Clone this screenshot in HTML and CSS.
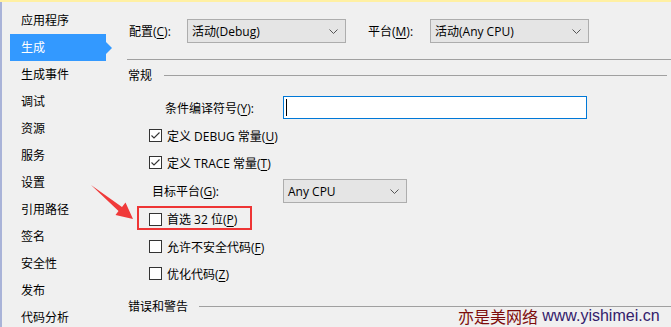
FILE: index.html
```html
<!DOCTYPE html>
<html lang="zh-CN">
<head>
  <meta charset="UTF-8" />
  <title>生成</title>
  <link rel="stylesheet" href="styles.css">
</head>
<body>
  <div class="topline"></div>
  <div class="window">
    <ul class="nav">
      <li>应用程序</li>
      <li class="active">生成</li>
      <li>生成事件</li>
      <li>调试</li>
      <li>资源</li>
      <li>服务</li>
      <li>设置</li>
      <li>引用路径</li>
      <li>签名</li>
      <li>安全性</li>
      <li>发布</li>
      <li>代码分析</li>
    </ul>

    <div class="page">
      <div class="config-row">
        <label class="lbl lbl-config">配置(<u>C</u>):</label>
        <div class="select select-config">
          <span>活动(Debug)</span>
          <svg class="chevron" width="9" height="5" viewBox="0 0 9 5"><polyline points="0.5,0.5 4.5,4.5 8.5,0.5" /></svg>
        </div>
        <label class="lbl lbl-platform">平台(<u>M</u>):</label>
        <div class="select select-config">
          <span>活动(Any CPU)</span>
          <svg class="chevron" width="9" height="5" viewBox="0 0 9 5"><polyline points="0.5,0.5 4.5,4.5 8.5,0.5" /></svg>
        </div>
      </div>

      <div class="rule"></div>

      <div class="section section-general">
        <span>常规</span>
        <i class="section-line"></i>
      </div>

      <div class="field-row">
        <label class="field-label">条件编译符号(<u>Y</u>):</label>
        <div class="textbox"><i class="caret"></i></div>
      </div>

      <div class="check-row first-check">
        <span class="box">
          <svg width="11" height="11" viewBox="0 0 11 11"><polyline points="1.5,5.5 4,8 9.5,2.5" /></svg>
        </span>
        <span>定义 DEBUG 常量(<u>U</u>)</span>
      </div>
      <div class="check-row">
        <span class="box">
          <svg width="11" height="11" viewBox="0 0 11 11"><polyline points="1.5,5.5 4,8 9.5,2.5" /></svg>
        </span>
        <span>定义 TRACE 常量(<u>T</u>)</span>
      </div>

      <div class="target-row">
        <label class="target-label">目标平台(<u>G</u>):</label>
        <div class="select select-target">
          <span>Any CPU</span>
          <svg class="chevron" width="9" height="5" viewBox="0 0 9 5"><polyline points="0.5,0.5 4.5,4.5 8.5,0.5" /></svg>
        </div>
      </div>

      <div class="highlight-row">
        <div class="highlight">
          <span class="box"></span>
          <span>首选 32 位(<u>P</u>)</span>
        </div>
      </div>

      <div class="check-row after-highlight">
        <span class="box"></span>
        <span>允许不安全代码(<u>F</u>)</span>
      </div>
      <div class="check-row">
        <span class="box"></span>
        <span>优化代码(<u>Z</u>)</span>
      </div>

      <div class="section section-errors">
        <span>错误和警告</span>
        <i class="section-line"></i>
      </div>
    </div>
  </div>

  <!-- annotation arrow pointing at the highlighted option -->
  <svg class="arrow" width="50" height="42" viewBox="88 182 50 42">
    <polygon points="91,185 122,207 125.5,202.5 133,219 115.5,215 118.5,211" />
  </svg>

  <div class="watermark"><span class="wm-cn">亦是美网络</span> <span class="wm-url">www.yishimei.cn</span></div>
</body>
</html>
```

FILE: styles.css
```css
html, body {
  margin: 0;
  padding: 0;
}

body {
  width: 671px;
  height: 327px;
  overflow: hidden;
  position: relative;
  background-color: #f0f0f0;
  color: #000;
  font-family: "Open Sans", "Noto Sans CJK SC", sans-serif;
  font-size: 12px;
}

u {
  text-underline-offset: 2px;
}

.topline {
  height: 2px;
  background-color: #fff0a3;
}

.window {
  display: flex;
  height: 325px;
  border-left: 2px solid #a9b3d8;
}

/* left navigation */
.nav {
  list-style: none;
  margin: 0;
  padding: 5px 0 0 8px;
  width: 117px;
  flex: none;
}

.nav li {
  position: relative;
  width: 85px;
  height: 27px;
  line-height: 27px;
  padding-left: 11px;
  white-space: nowrap;
}

.nav li.active {
  background-color: #3399ff;
  color: #fff;
}

.nav li.active::after {
  content: "";
  position: absolute;
  left: 96px;
  top: 8px;
  border-top: 6px solid transparent;
  border-bottom: 6px solid transparent;
  border-left: 6px solid #3399ff;
}

/* right page */
.page {
  flex: 1;
  padding-top: 17px;
}

.config-row {
  display: flex;
  align-items: center;
  height: 24px;
  padding-left: 2px;
}

.lbl {
  white-space: nowrap;
}

.lbl-config {
  width: 58px;
}

.lbl-platform {
  width: 62px;
  margin-left: 22px;
}

.select {
  box-sizing: border-box;
  display: flex;
  align-items: center;
  justify-content: space-between;
  height: 24px;
  padding: 0 7px 0 4px;
  background-color: #e5e5e5;
  border: 1px solid #adadad;
  white-space: nowrap;
}

.select-config {
  width: 159px;
}

.select-target {
  width: 124px;
}

.chevron polyline {
  fill: none;
  stroke: #555;
  stroke-width: 1;
}

.rule {
  margin-top: 16px;
  height: 1px;
  background-color: #a0a0a0;
}

.section {
  display: flex;
  align-items: center;
  gap: 12px;
  height: 16px;
  padding-left: 1px;
  margin-right: 4px;
}

.section-line {
  flex: 1;
  height: 1px;
  background-color: #a0a0a0;
}

.section-general {
  margin-top: 7px;
}

.section-errors {
  margin-top: 11px;
  gap: 11px;
  margin-right: 0;
}

.field-row {
  display: flex;
  align-items: center;
  margin-top: 13px;
  height: 23px;
  padding-left: 38px;
}

.field-label {
  width: 118px;
  white-space: nowrap;
}

.textbox {
  box-sizing: border-box;
  width: 304px;
  height: 23px;
  background-color: #fff;
  border: 1px solid #0078d7;
  display: flex;
  align-items: center;
}

.caret {
  width: 1px;
  height: 17px;
  margin-left: 2px;
  background-color: #000;
}

.check-row {
  display: flex;
  align-items: center;
  gap: 5px;
  height: 27px;
  padding-left: 22px;
  white-space: nowrap;
}

.first-check {
  margin-top: 3px;
}

.after-highlight {
  margin-top: 3px;
}

.box {
  box-sizing: border-box;
  width: 13px;
  height: 13px;
  border: 1px solid #333;
  background-color: #fff;
  display: flex;
  flex: none;
}

.box polyline {
  fill: none;
  stroke: #333;
  stroke-width: 1.1;
}

.target-row {
  display: flex;
  align-items: center;
  margin-top: 3px;
  height: 24px;
  padding-left: 25px;
}

.target-label {
  width: 131px;
  white-space: nowrap;
}

.highlight-row {
  margin-top: 3px;
  padding-left: 10px;
  height: 24px;
}

.highlight {
  box-sizing: border-box;
  display: inline-flex;
  align-items: center;
  gap: 5px;
  height: 24px;
  width: 115px;
  padding-left: 10px;
  padding-top: 2px;
  border: 2px solid #ee3535;
  white-space: nowrap;
}

.arrow {
  position: absolute;
  left: 88px;
  top: 182px;
}

.arrow polygon {
  fill: #f03a3a;
}

.watermark {
  position: absolute;
  left: 458px;
  top: 307px;
  font-size: 16px;
  line-height: 18px;
  white-space: nowrap;
}

.wm-cn,
.wm-url {
  display: inline-block;
  line-height: 18px;
  vertical-align: top;
}

.wm-cn {
  color: #7d0b0b;
  font-family: "Noto Sans CJK SC", sans-serif;
}

.wm-url {
  color: #33206b;
  font-family: "Liberation Sans", sans-serif;
}
```
